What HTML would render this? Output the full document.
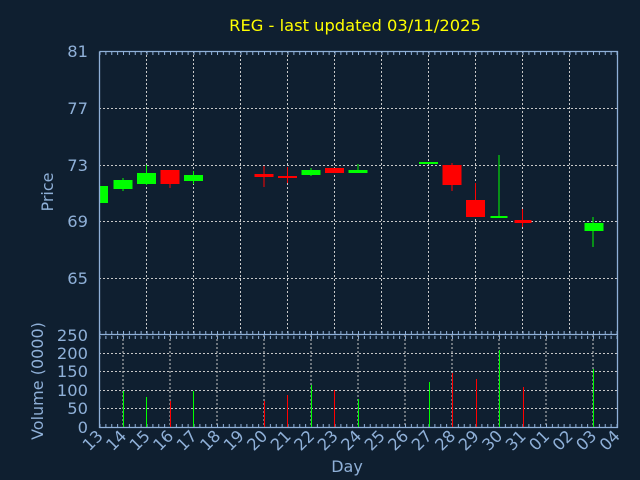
<!DOCTYPE html>
<html><head><meta charset="utf-8"><style>
html,body{margin:0;padding:0;background:#0f1f30;}
svg{display:block;}
text{font-family:"DejaVu Sans","Liberation Sans",sans-serif;}
</style></head><body>
<svg width="640" height="480" viewBox="0 0 640 480" xmlns="http://www.w3.org/2000/svg">
<defs>
<pattern id="tk" x="99.5" y="0" width="5.875" height="480" patternUnits="userSpaceOnUse">
<rect x="0" y="0" width="1" height="480" fill="#8fb0d8"/>
</pattern>
</defs>
<rect width="640" height="480" fill="#0f1f30"/>
<text x="355" y="31" fill="#ffff00" font-size="16.3" text-anchor="middle">REG - last updated 03/11/2025</text>
<g stroke="#c8c8c8" stroke-width="1" stroke-dasharray="2,2" fill="none">
<path d="M99 108.5H617M99 165.5H617M99 221.5H617M99 278.5H617"/>
<path d="M146.5 51V334M193.5 51V334M240.5 51V334M287.5 51V334M334.5 51V334M381.5 51V334M428.5 51V334M475.5 51V334M522.5 51V334M569.5 51V334"/>
<path d="M99 408.5H617M99 390.5H617M99 371.5H617M99 353.5H617"/>
<path d="M123 335V427M170 335V427M217 335V427M264 335V427M311 335V427M358 335V427M405 335V427M452 335V427M499 335V427M546 335V427M593 335V427"/>
</g>
<rect x="99" y="52" width="518" height="3" fill="url(#tk)"/>
<rect x="99" y="331" width="518" height="3" fill="url(#tk)"/>
<rect x="99" y="336" width="518" height="3" fill="url(#tk)"/>
<rect x="99" y="424" width="518" height="3" fill="url(#tk)"/>
<g fill="#00ff00">
<rect x="99" y="186" width="9" height="17"/>
<rect x="113.5" y="180" width="19" height="9"/><rect x="122.5" y="178" width="1" height="13"/>
<rect x="137" y="173" width="19" height="11"/><rect x="146" y="165" width="1" height="20"/>
<rect x="184" y="175" width="19" height="6"/><rect x="193" y="171" width="1" height="13"/>
<rect x="301.5" y="170" width="19" height="5"/><rect x="310.5" y="168" width="1" height="8"/>
<rect x="348.5" y="170" width="19" height="3"/><rect x="357.5" y="164" width="1" height="9"/>
<rect x="419" y="162" width="19" height="2"/>
<rect x="490.5" y="216" width="17" height="2"/><rect x="498.5" y="155" width="1" height="63"/>
<rect x="584.5" y="223" width="19" height="8"/><rect x="592.5" y="217" width="1" height="30"/>
</g>
<g fill="#ff0000">
<rect x="160.5" y="170" width="19" height="14"/><rect x="169.5" y="184" width="1" height="4"/>
<rect x="254.5" y="174" width="19" height="3"/><rect x="263.5" y="166" width="1" height="21"/>
<rect x="278" y="176" width="19" height="2"/><rect x="287" y="167" width="1" height="16"/>
<rect x="325" y="168" width="19" height="5"/>
<rect x="442.5" y="165" width="19" height="20"/><rect x="451.5" y="163" width="1" height="28"/>
<rect x="466" y="200" width="19" height="17"/><rect x="475" y="183" width="1" height="17"/>
<rect x="514.5" y="220" width="17" height="3"/><rect x="522" y="209" width="1" height="18"/>
</g>
<g stroke-width="1">
<path stroke="#00ff00" d="M123.5 391V427M146.5 397V427M193.5 391V427M311.5 385V427M358.5 399V427M429.5 382V427M499.5 350V427M593.5 369V427"/>
<path stroke="#ff0000" d="M170.5 401V427M264.5 401V427M287.5 395V427M334.5 390V427M452.5 373V427M476.5 379V427M523.5 387V427"/>
</g>
<g stroke="#8fb0d8" stroke-width="1.3" fill="none">
<path d="M99.5 51.5V427.5H617.5V51.5H99.5"/>
<path d="M99.5 334.5H617.5"/>
</g>
<g fill="#8fb0d8" font-size="16.3" text-anchor="end">
<text x="88" y="57">81</text><text x="88" y="114">77</text><text x="88" y="171">73</text><text x="88" y="227">69</text><text x="88" y="284">65</text>
<text x="88" y="341">250</text><text x="88" y="359">200</text><text x="88" y="377">150</text><text x="88" y="396">100</text><text x="88" y="414">50</text><text x="88" y="433">0</text>
</g>
<text transform="translate(53,192) rotate(-90)" fill="#8fb0d8" font-size="16" text-anchor="middle">Price</text>
<text transform="translate(43,381) rotate(-90)" fill="#8fb0d8" font-size="16" text-anchor="middle">Volume (0000)</text>
<text x="347" y="472" fill="#8fb0d8" font-size="16" text-anchor="middle">Day</text>
<g fill="#8fb0d8" font-size="16.3" text-anchor="end">
<text transform="translate(104,437) rotate(-45)">13</text>
<text transform="translate(127.5,437) rotate(-45)">14</text>
<text transform="translate(151,437) rotate(-45)">15</text>
<text transform="translate(174.5,437) rotate(-45)">16</text>
<text transform="translate(198,437) rotate(-45)">17</text>
<text transform="translate(221.5,437) rotate(-45)">18</text>
<text transform="translate(245,437) rotate(-45)">19</text>
<text transform="translate(268.5,437) rotate(-45)">20</text>
<text transform="translate(292,437) rotate(-45)">21</text>
<text transform="translate(315.5,437) rotate(-45)">22</text>
<text transform="translate(339,437) rotate(-45)">23</text>
<text transform="translate(362.5,437) rotate(-45)">24</text>
<text transform="translate(386,437) rotate(-45)">25</text>
<text transform="translate(409.5,437) rotate(-45)">26</text>
<text transform="translate(433,437) rotate(-45)">27</text>
<text transform="translate(456.5,437) rotate(-45)">28</text>
<text transform="translate(480,437) rotate(-45)">29</text>
<text transform="translate(503.5,437) rotate(-45)">30</text>
<text transform="translate(527,437) rotate(-45)">31</text>
<text transform="translate(550.5,437) rotate(-45)">01</text>
<text transform="translate(574,437) rotate(-45)">02</text>
<text transform="translate(597.5,437) rotate(-45)">03</text>
<text transform="translate(621,437) rotate(-45)">04</text>
</g>
</svg>
</body></html>
